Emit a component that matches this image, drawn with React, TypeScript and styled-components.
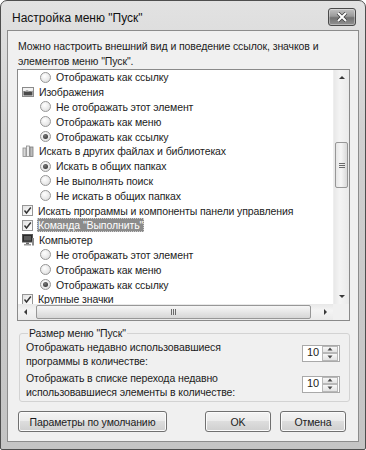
import React from 'react';
import styled, { createGlobalStyle } from 'styled-components';

const GlobalStyle = createGlobalStyle`
  html, body { margin: 0; padding: 0; background: #ffffff; }
  body {
    font-family: "Liberation Sans", Arial, sans-serif;
    font-size: 10.5px;
    letter-spacing: -0.1px;
    color: #1c1c1c;
  }
  * { box-sizing: border-box; }
`;

const Window = styled.div`
  width: 366px;
  height: 450px;
  display: flex;
  flex-direction: column;
  padding: 0 6px 7px 6px;
  background: linear-gradient(180deg, #e2e2e2 0%, #d0d0d0 30%, #c4c4c4 100%);
  border: 1px solid #4e4e4e;
  border-radius: 7px 7px 2px 2px;
`;

const TitleBar = styled.div`
  height: 29px;
  display: flex;
  align-items: flex-start;
  justify-content: space-between;
  padding: 0 3px 0 5px;
`;

const Title = styled.span`
  font-size: 12px;
  letter-spacing: 0;
  line-height: 14px;
  color: #111111;
  margin-top: 10px;
`;

const CloseButton = styled.div`
  width: 28px;
  height: 18px;
  margin-top: 7px;
  border: 1px solid #4a4a4a;
  border-radius: 3px;
  background: linear-gradient(180deg, #c2c2c2 0%, #9a9a9a 45%, #727272 55%, #929292 100%);
  box-shadow: inset 0 0 0 1px rgba(255, 255, 255, 0.35);
  display: flex;
  align-items: center;
  justify-content: center;
`;

const Client = styled.div`
  flex: 1;
  background: #f0f0f0;
  border: 1px solid #8c8c8c;
  padding: 8px 8px 9px 9px;
  display: flex;
  flex-direction: column;
`;

const Intro = styled.p`
  margin: 0;
  line-height: 15px;
  padding-left: 1px;
  white-space: nowrap;
`;

const ListBox = styled.div`
  height: 252px;
  border: 1px solid #8a8a8a;
  background: #ffffff;
  display: grid;
  grid-template-columns: 1fr 16px;
  grid-template-rows: 1fr 16px;
`;

const ListContent = styled.div`
  overflow: hidden;
  padding: 0 0 0 4px;
`;

const Row = styled.div<{ $indent: boolean }>`
  height: 14.8px;
  display: flex;
  align-items: center;
  gap: 5px;
  padding-left: ${(p) => (p.$indent ? '18px' : '0')};
  white-space: nowrap;
`;

const Label = styled.span<{ $selected?: boolean }>`
  padding: 0 1px;
  line-height: 14px;
  background: ${(p) => (p.$selected ? '#8b8b8b' : 'transparent')};
  color: ${(p) => (p.$selected ? '#ffffff' : 'inherit')};
  outline: ${(p) => (p.$selected ? '1px dotted #d0d0d0' : 'none')};
  outline-offset: -1px;
  margin-left: -1px;
`;

const Radio = styled.span<{ $on?: boolean }>`
  width: 11px;
  height: 11px;
  border-radius: 50%;
  border: 1px solid #969696;
  background: radial-gradient(circle at 40% 35%, #ffffff 0%, #e8e8e8 60%, #d2d2d2 100%);
  display: flex;
  align-items: center;
  justify-content: center;
  flex: none;
  &::after {
    content: '';
    width: 5px;
    height: 5px;
    border-radius: 50%;
    background: ${(p) => (p.$on ? 'radial-gradient(circle at 40% 35%, #7a7a7a, #262626)' : 'transparent')};
  }
`;

const Check = styled.span`
  width: 11px;
  height: 11px;
  border: 1px solid #969696;
  background: linear-gradient(135deg, #e2e2e2, #ffffff);
  display: flex;
  align-items: center;
  justify-content: center;
  flex: none;
`;

const IconBox = styled.span`
  width: 12px;
  height: 12px;
  display: flex;
  align-items: center;
  justify-content: center;
  flex: none;
`;

const VScroll = styled.div`
  background: linear-gradient(90deg, #e8e8e8, #f4f4f4 40%, #eaeaea);
  border-left: 1px solid #eeeeee;
  display: flex;
  flex-direction: column;
  align-items: stretch;
`;

const ArrowBtn = styled.div`
  width: 16px;
  height: 16px;
  display: flex;
  align-items: center;
  justify-content: center;
  flex: none;
`;

const Track = styled.div<{ $dir: 'v' | 'h' }>`
  flex: 1;
  display: flex;
  flex-direction: ${(p) => (p.$dir === 'v' ? 'column' : 'row')};
  padding: ${(p) => (p.$dir === 'v' ? '56px 1px 0 1px' : '1px 6px 1px 2px')};
`;

const Thumb = styled.div<{ $dir: 'v' | 'h'; $len: number }>`
  ${(p) => (p.$dir === 'v' ? `height: ${p.$len}px;` : 'flex: 1;')}
  border: 1px solid #979797;
  border-radius: 2px;
  background: ${(p) =>
    p.$dir === 'v'
      ? 'linear-gradient(90deg, #e6e6e6, #f6f6f6 45%, #d9d9d9)'
      : 'linear-gradient(180deg, #f6f6f6, #e8e8e8 45%, #d6d6d6)'};
  display: flex;
  align-items: center;
  justify-content: center;
`;

const HScroll = styled.div`
  background: linear-gradient(180deg, #e8e8e8, #f4f4f4 40%, #eaeaea);
  display: flex;
  align-items: stretch;
`;

const Corner = styled.div`
  background: #f0f0f0;
`;

const Group = styled.fieldset`
  margin: 5px 0 0 2px;
  padding: 0 8px 0 6px;
  border: 1px solid #d3d3d3;
  border-radius: 3px;
`;

const Legend = styled.legend`
  padding: 0 1px;
  margin-left: 2px;
  line-height: 14px;
`;

const SettingRow = styled.div`
  display: flex;
  align-items: center;
  justify-content: space-between;
  line-height: 13.5px;
  &:first-of-type {
    margin-top: 1px;
  }
  & + & {
    margin-top: 4px;
  }
  &:last-of-type {
    margin-bottom: 2px;
  }
`;

const Spinner = styled.div`
  width: 38px;
  height: 17px;
  border: 1px solid #a9a9a9;
  background: #ffffff;
  display: flex;
  align-items: center;
  margin-right: 1px;
  margin-top: -3px;
`;

const SpinValue = styled.span`
  flex: 1;
  padding-left: 4px;
  font-size: 11px;
`;

const SpinButtons = styled.div`
  width: 16px;
  height: 15px;
  display: flex;
  flex-direction: column;
  margin-right: 1px;
`;

const SpinHalf = styled.div`
  flex: 1;
  border: 1px solid #b8b8b8;
  background: linear-gradient(180deg, #f7f7f7, #e3e3e3);
  display: flex;
  align-items: center;
  justify-content: center;
`;

const Footer = styled.div`
  margin-top: auto;
  display: flex;
  align-items: center;
  gap: 9px;
  padding-left: 1px;
`;

const Button = styled.button<{ $w: number }>`
  width: ${(p) => p.$w}px;
  height: 21px;
  font-family: inherit;
  font-size: 10.5px;
  letter-spacing: -0.1px;
  color: #1c1c1c;
  border: 1px solid #707070;
  border-radius: 3px;
  background: linear-gradient(180deg, #f4f4f4 0%, #ebebeb 45%, #dddddd 50%, #cfcfcf 100%);
  box-shadow: inset 0 0 0 1px #fbfbfb;
  padding: 0;
  &:first-child {
    margin-right: 29px;
  }
`;

type Item = {
  kind: 'radio' | 'check' | 'icon';
  label: string;
  on?: boolean;
  icon?: 'images' | 'library' | 'computer';
  selected?: boolean;
};

const items: Item[] = [
  { kind: 'radio', label: 'Отображать как ссылку' },
  { kind: 'icon', icon: 'images', label: 'Изображения' },
  { kind: 'radio', label: 'Не отображать этот элемент' },
  { kind: 'radio', label: 'Отображать как меню' },
  { kind: 'radio', label: 'Отображать как ссылку', on: true },
  { kind: 'icon', icon: 'library', label: 'Искать в других файлах и библиотеках' },
  { kind: 'radio', label: 'Искать в общих папках', on: true },
  { kind: 'radio', label: 'Не выполнять поиск' },
  { kind: 'radio', label: 'Не искать в общих папках' },
  { kind: 'check', label: 'Искать программы и компоненты панели управления', on: true },
  { kind: 'check', label: 'Команда "Выполнить"', on: true, selected: true },
  { kind: 'icon', icon: 'computer', label: 'Компьютер' },
  { kind: 'radio', label: 'Не отображать этот элемент' },
  { kind: 'radio', label: 'Отображать как меню' },
  { kind: 'radio', label: 'Отображать как ссылку', on: true },
  { kind: 'check', label: 'Крупные значки', on: true },
];

const ItemIcon: React.FC<{ name: Item['icon'] }> = ({ name }) => {
  if (name === 'images') {
    return (
      <svg width="12" height="10" viewBox="0 0 12 10">
        <rect x="0.5" y="0.5" width="11" height="9" fill="#f2f2f2" stroke="#8a8a8a" />
        <rect x="1.5" y="4" width="9" height="4.5" fill="#4a4a4a" />
        <path d="M1.5 5 L5 3 L8 4.5 L10.5 3.5 L10.5 5 Z" fill="#9a9a9a" />
      </svg>
    );
  }
  if (name === 'library') {
    return (
      <svg width="12" height="12" viewBox="0 0 12 12">
        <rect x="1" y="3" width="3" height="8.5" fill="#d8d8d8" stroke="#8c8c8c" strokeWidth="0.8" />
        <rect x="4.5" y="1" width="3" height="10.5" fill="#ededed" stroke="#8c8c8c" strokeWidth="0.8" />
        <rect x="8" y="2" width="3" height="9.5" fill="#bdbdbd" stroke="#7a7a7a" strokeWidth="0.8" />
      </svg>
    );
  }
  return (
    <svg width="12" height="12" viewBox="0 0 12 12">
      <rect x="0.5" y="0.5" width="10" height="7.5" fill="#2a2a2a" stroke="#555" />
      <rect x="2" y="2" width="7" height="4.5" fill="#5a5a5a" />
      <rect x="4" y="8.5" width="3" height="1.5" fill="#6a6a6a" />
      <rect x="2" y="10" width="7" height="1.5" fill="#9a9a9a" />
      <rect x="10" y="4" width="2" height="7.5" fill="#8a8a8a" />
    </svg>
  );
};

const Tick: React.FC = () => (
  <svg width="9" height="9" viewBox="0 0 9 9">
    <path d="M1.5 4.5 L3.5 7 L7.8 1.5" fill="none" stroke="#333333" strokeWidth="1.4" />
  </svg>
);

const Tri: React.FC<{ dir: 'up' | 'down' | 'left' | 'right' }> = ({ dir }) => {
  const d = {
    up: 'M1 5 L4 2 L7 5 Z',
    down: 'M1 3 L4 6 L7 3 Z',
    left: 'M5 1 L2 4 L5 7 Z',
    right: 'M3 1 L6 4 L3 7 Z',
  }[dir];
  return (
    <svg width="8" height="8" viewBox="0 0 8 8">
      <path d={d} fill="#3a3a3a" />
    </svg>
  );
};

const Grip: React.FC<{ dir: 'v' | 'h' }> = ({ dir }) =>
  dir === 'v' ? (
    <svg width="8" height="7" viewBox="0 0 8 7">
      <path d="M1 1.5 H7 M1 3.5 H7 M1 5.5 H7" stroke="#6a6a6a" strokeWidth="1" />
    </svg>
  ) : (
    <svg width="7" height="8" viewBox="0 0 7 8">
      <path d="M1.5 1 V7 M3.5 1 V7 M5.5 1 V7" stroke="#6a6a6a" strokeWidth="1" />
    </svg>
  );

const SmallTri: React.FC<{ up?: boolean }> = ({ up }) => (
  <svg width="6" height="4" viewBox="0 0 6 4">
    <path d={up ? 'M0.5 3.5 L3 0.5 L5.5 3.5 Z' : 'M0.5 0.5 L3 3.5 L5.5 0.5 Z'} fill="#4a4a4a" />
  </svg>
);

const Spin: React.FC<{ value: number }> = ({ value }) => (
  <Spinner>
    <SpinValue>{value}</SpinValue>
    <SpinButtons>
      <SpinHalf>
        <SmallTri up />
      </SpinHalf>
      <SpinHalf>
        <SmallTri />
      </SpinHalf>
    </SpinButtons>
  </Spinner>
);

export default function App() {
  return (
    <>
      <GlobalStyle />
      <Window>
        <TitleBar>
          <Title>Настройка меню "Пуск"</Title>
          <CloseButton>
            <svg width="12" height="10" viewBox="0 0 12 10">
              <path d="M2 1 L10 9 M10 1 L2 9" stroke="#3a3a3a" strokeWidth="3.4" />
              <path d="M2 1 L10 9 M10 1 L2 9" stroke="#ffffff" strokeWidth="2" />
            </svg>
          </CloseButton>
        </TitleBar>
        <Client>
          <Intro>
            Можно настроить внешний вид и поведение ссылок, значков и
            <br />
            элементов меню "Пуск".
          </Intro>
          <ListBox>
            <ListContent>
              {items.map((it, i) => (
                <Row key={i} $indent={it.kind === 'radio'}>
                  {it.kind === 'radio' && <Radio $on={it.on} />}
                  {it.kind === 'check' && <Check>{it.on && <Tick />}</Check>}
                  {it.kind === 'icon' && (
                    <IconBox>
                      <ItemIcon name={it.icon} />
                    </IconBox>
                  )}
                  <Label $selected={it.selected}>{it.label}</Label>
                </Row>
              ))}
            </ListContent>
            <VScroll>
              <ArrowBtn>
                <Tri dir="up" />
              </ArrowBtn>
              <Track $dir="v">
                <Thumb $dir="v" $len={46}>
                  <Grip dir="v" />
                </Thumb>
              </Track>
              <ArrowBtn>
                <Tri dir="down" />
              </ArrowBtn>
            </VScroll>
            <HScroll>
              <ArrowBtn>
                <Tri dir="left" />
              </ArrowBtn>
              <Track $dir="h">
                <Thumb $dir="h" $len={0}>
                  <Grip dir="h" />
                </Thumb>
              </Track>
              <ArrowBtn>
                <Tri dir="right" />
              </ArrowBtn>
            </HScroll>
            <Corner />
          </ListBox>
          <Group>
            <Legend>Размер меню "Пуск"</Legend>
            <SettingRow>
              <span>
                Отображать недавно использовавшиеся
                <br />
                программы в количестве:
              </span>
              <Spin value={10} />
            </SettingRow>
            <SettingRow>
              <span>
                Отображать в списке перехода недавно
                <br />
                использовавшиеся элементы в количестве:
              </span>
              <Spin value={10} />
            </SettingRow>
          </Group>
          <Footer>
            <Button $w={149}>Параметры по умолчанию</Button>
            <Button $w={66}>OK</Button>
            <Button $w={66}>Отмена</Button>
          </Footer>
        </Client>
      </Window>
    </>
  );
}
